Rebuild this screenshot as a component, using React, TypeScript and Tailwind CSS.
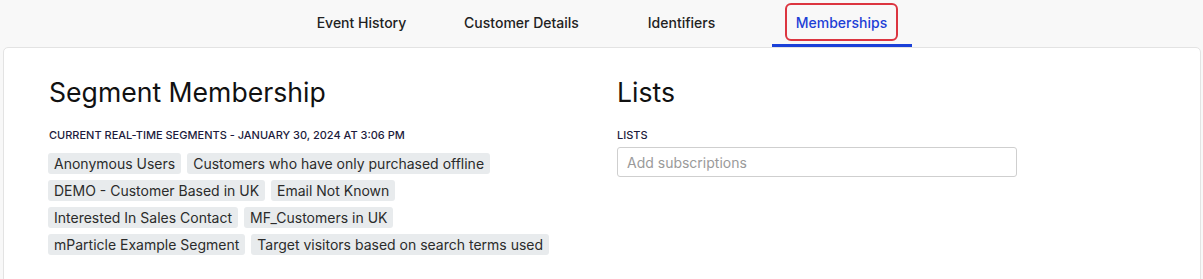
import React from "react";

const segments = [
  "Anonymous Users",
  "Customers who have only purchased offline",
  "DEMO - Customer Based in UK",
  "Email Not Known",
  "Interested In Sales Contact",
  "MF_Customers in UK",
  "mParticle Example Segment",
  "Target visitors based on search terms used",
];

const tabs = ["Event History", "Customer Details", "Identifiers", "Memberships"];

export default function App() {
  return (
    <div
      className="w-[1203px] h-[279px] overflow-hidden bg-[#f8f8f8]"
      style={{ fontFamily: "Inter, 'Noto Sans', sans-serif" }}
    >
      <div className="flex justify-center h-[47px]">
        {tabs.map((t) => {
          const active = t === "Memberships";
          return (
            <div
              key={t}
              className={`w-[140px] mx-[10px] flex items-center justify-center text-[14px] font-[450] ${
                active ? "text-[#1d3fd6] border-b-[3px] border-[#1a40d8]" : "text-[#222] border-b-[3px] border-transparent"
              }`}
            >
              {active ? (
                <span className="h-[38px] px-[9px] flex items-center border-2 border-[#dc3540] rounded-[6px]">
                  {t}
                </span>
              ) : (
                t
              )}
            </div>
          );
        })}
      </div>
      <div className="ml-[3px] mr-[2px] bg-white border border-[#e3e3e3] rounded-tl-[5px] rounded-tr-[5px] h-[300px] pl-[45px] pr-[45px] pt-[28px]">
        <div className="grid grid-cols-[537px_1fr] gap-x-[31px]">
          <div>
            <h2 className="text-[26.6px] leading-[32px] font-normal text-[#111]">Segment Membership</h2>
            <div className="mt-[19px] text-[11px] leading-[16px] font-medium uppercase text-[#1c1b3c]">
              Current Real-Time Segments - January 30, 2024 at 3:06 PM
            </div>
            <div className="mt-[10px] flex flex-wrap gap-x-[6px] gap-y-[6px] -ml-px">
              {segments.map((s) => (
                <span
                  key={s}
                  className="h-[21px] leading-[21px] px-[6px] rounded-[3px] bg-[#e8ebed] text-[14px] text-[#2b2b2b] whitespace-nowrap"
                >
                  {s}
                </span>
              ))}
            </div>
          </div>
          <div>
            <h2 className="text-[26.6px] leading-[32px] font-normal text-[#111]">Lists</h2>
            <div className="mt-[19px] text-[11px] leading-[16px] font-medium uppercase text-[#1c1b3c]">
              Lists
            </div>
            <div className="mt-[4px] w-[400px] h-[30px] border border-[#cfcfcf] rounded-[3px] flex items-center pl-[9px] text-[14px] text-[#9a9a9a]">
              Add subscriptions
            </div>
          </div>
        </div>
      </div>
    </div>
  );
}
